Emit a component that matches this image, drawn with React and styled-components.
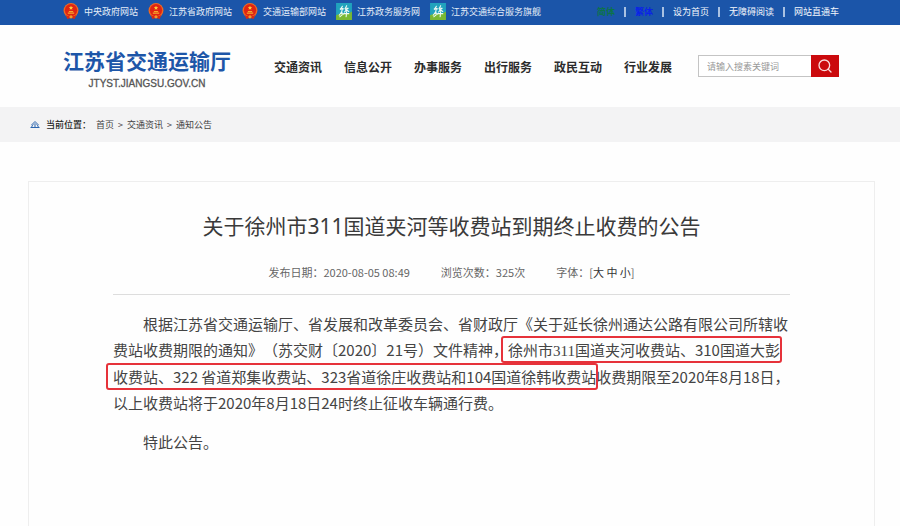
import { useState } from "react";
import styled, { createGlobalStyle } from "styled-components";
import { Search } from "lucide-react";

const GlobalStyle = createGlobalStyle`
  * {
    box-sizing: border-box;
  }

  body {
    margin: 0;
    background-color: #fefefe;
    color: #444;
    font-family: "Noto Sans CJK SC", sans-serif;
    text-spacing-trim: space-all;
  }

  a {
    color: inherit;
    text-decoration: none;
  }
`;

const Page = styled.div`
  display: flex;
  flex-direction: column;
  min-height: 100vh;
`;

const TopBar = styled.div`
  display: flex;
  align-items: center;
  justify-content: space-between;
  height: 25px;
  padding: 0 61px 2px 63px;
  background-color: #1b55a9;
  color: #e4edf8;
  font-size: 9px;
  line-height: 14px;
  white-space: nowrap;
`;

const SiteLinks = styled.nav`
  display: flex;
  gap: 10px;
`;

const SiteLink = styled.a`
  display: flex;
  align-items: center;
  gap: 5px;
`;

const ToolLinks = styled.div`
  display: flex;
  align-items: center;
  gap: 9px;
`;

const ToolLink = styled.a`
  color: ${(props) => props.$color || "#f4f8fc"};
  font-weight: ${(props) => (props.$color ? "bold" : "normal")};
`;

const Separator = styled.span`
  width: 2px;
  height: 10px;
  background-color: #a9c1e2;
`;

const Header = styled.header`
  display: flex;
  align-items: center;
  height: 82px;
  padding: 0 61px 0 63px;
  white-space: nowrap;
`;

const Logo = styled.a`
  display: flex;
  flex-direction: column;
  align-items: center;
  padding-top: 8px;
`;

const LogoName = styled.span`
  color: #1d56a8;
  font-size: 21px;
  font-weight: bold;
  line-height: 28px;
`;

const LogoDomain = styled.span`
  color: #555;
  font-family: "Liberation Sans", Arial, sans-serif;
  font-size: 10px;
  line-height: 20px;
  -webkit-text-stroke: 0.3px #555;
`;

const MainNav = styled.nav`
  display: flex;
  gap: 22px;
  margin-left: 43px;
  color: #2c2c2c;
  font-size: 12px;
  font-weight: bold;
`;

const SearchForm = styled.form`
  display: flex;
  width: 141px;
  height: 22px;
  margin-left: auto;
`;

const SearchInput = styled.input`
  flex: 1;
  min-width: 0;
  padding: 0 8px;
  border: 1px solid #c4c4c4;
  border-right: none;
  border-radius: 0;
  background-color: #fff;
  color: #444;
  font-family: inherit;
  font-size: 9px;
  outline: none;

  &::placeholder {
    color: #999;
  }
`;

const SearchButton = styled.button`
  display: flex;
  align-items: center;
  justify-content: center;
  width: 28px;
  padding: 0;
  border: none;
  background-color: #cb0a0d;
  color: #fbdcdc;
  cursor: pointer;
`;

const Breadcrumb = styled.nav`
  display: flex;
  align-items: center;
  gap: 4px;
  height: 35px;
  padding: 0 30px;
  background-color: #f3f3f4;
  color: #444;
  font-size: 9px;
`;

const BreadcrumbLabel = styled.span`
  margin: 0 1px 0 2px;
  color: #222;
  font-weight: 500;
`;

const Article = styled.article`
  flex: 1;
  margin: 39px 25px 0 28px;
  padding: 29px 84px 40px;
  border: 1px solid #eee;
  border-bottom: none;
`;

const Title = styled.h1`
  margin: 0 0 23px;
  color: #3a3a3a;
  font-family: "Noto Sans", "Noto Sans CJK SC", sans-serif;
  font-size: 21px;
  font-weight: normal;
  line-height: 30px;
  text-align: center;
`;

const Meta = styled.div`
  display: flex;
  justify-content: center;
  gap: 31px;
  padding-bottom: 14px;
  border-bottom: 1px solid #ddd;
  color: #666;
  font-size: 11px;
  line-height: 16px;
`;

const SizeButton = styled.button`
  padding: 0;
  border: none;
  background: none;
  color: #333;
  font: inherit;
  cursor: pointer;
`;

const Content = styled.div`
  margin-top: 16px;
  font-size: ${(props) => props.$size}px;
  line-height: 26px;
  white-space: nowrap;
`;

const Paragraph = styled.p`
  margin: 0 0 13px;
  text-indent: 2em;
`;

const Highlight = styled.mark`
  margin-left: -5px;
  padding: 1px 0 1px 5px;
  border-radius: 1px;
  outline: 2px solid #e6323a;
  background: none;
  color: inherit;
`;

const SerifNumber = styled.span`
  font-family: "Liberation Serif", "Times New Roman", serif;
`;

const EmblemIcon = () => (
  <svg width="16" height="17" viewBox="0 0 30 32" aria-hidden="true">
    <circle cx="15" cy="14" r="14" fill="#ee6a22" />
    <circle cx="15" cy="13.5" r="11.5" fill="#df2412" />
    <path d="M15 5l1.2 2.6 2.8.3-2.1 1.9.6 2.8-2.5-1.4-2.5 1.4.6-2.8L11 7.9l2.8-.3z" fill="#ffc83a" />
    <path d="M9 18h12v2H9zM11 15h8v2h-8z" fill="#f6a92c" />
    <path d="M5 22c3 3 6 3 10 1 4 2 7 2 10-1l-3 8-7-2-7 2z" fill="#d92a14" />
    <circle cx="15" cy="26" r="3" fill="#f29b2a" />
  </svg>
);

const ServiceIcon = () => (
  <svg width="16" height="17" viewBox="0 0 30 32" aria-hidden="true">
    <path d="M0 0h30v20L0 26z" fill="#21a3bd" />
    <path d="M0 23C10 18 20 24 30 16v16H0z" fill="#79b833" />
    <g fill="none" stroke="#effaf4" strokeWidth="2" strokeLinecap="round">
      <path d="M12 6l-4 6M8 11h6M12 10l-2 10M11 16l-5 7M20 5l-3 6M17 10h6M22 10l-6 7M18 12l6 4M15 20h9M20 16l-1 10M10 17l4 4M7 26l5-4" />
    </g>
  </svg>
);

const LocationIcon = () => (
  <svg width="10" height="9" viewBox="0 0 20 18" fill="none" stroke="#2b65ae" strokeWidth="2" aria-hidden="true">
    <path d="M3 10l7-7 7 7M7 10l3-3 3 3M1 15h18M5 10l-2 5M15 10l2 5M8 12h4" />
  </svg>
);

const siteLinks = [
  { name: "中央政府网站", icon: EmblemIcon },
  { name: "江苏省政府网站", icon: EmblemIcon },
  { name: "交通运输部网站", icon: EmblemIcon },
  { name: "江苏政务服务网", icon: ServiceIcon },
  { name: "江苏交通综合服务旗舰", icon: ServiceIcon },
];

const navItems = ["交通资讯", "信息公开", "办事服务", "出行服务", "政民互动", "行业发展"];

const fontSizes = { 大: 17, 中: 15, 小: 13 };

const App = () => {
  const [keyword, setKeyword] = useState("");
  const [size, setSize] = useState(15);

  return (
    <Page>
      <GlobalStyle />
      <TopBar>
        <SiteLinks>
          {siteLinks.map(({ name, icon: Icon }) => (
            <SiteLink key={name} href="#">
              <Icon />
              {name}
            </SiteLink>
          ))}
        </SiteLinks>
        <ToolLinks>
          <ToolLink href="#" $color="#0c7348">简体</ToolLink>
          <Separator />
          <ToolLink href="#" $color="#0a22e8">繁体</ToolLink>
          <Separator />
          <ToolLink href="#">设为首页</ToolLink>
          <Separator />
          <ToolLink href="#">无障碍阅读</ToolLink>
          <Separator />
          <ToolLink href="#">网站直通车</ToolLink>
        </ToolLinks>
      </TopBar>

      <Header>
        <Logo href="#">
          <LogoName>江苏省交通运输厅</LogoName>
          <LogoDomain>JTYST.JIANGSU.GOV.CN</LogoDomain>
        </Logo>
        <MainNav>
          {navItems.map((item) => (
            <a key={item} href="#">{item}</a>
          ))}
        </MainNav>
        <SearchForm onSubmit={(e) => e.preventDefault()}>
          <SearchInput
            aria-label="搜索"
            placeholder="请输入搜素关键词"
            value={keyword}
            onChange={(e) => setKeyword(e.target.value)}
          />
          <SearchButton type="submit" aria-label="搜索">
            <Search size={16} strokeWidth={2} />
          </SearchButton>
        </SearchForm>
      </Header>

      <Breadcrumb>
        <LocationIcon />
        <BreadcrumbLabel>当前位置：</BreadcrumbLabel>
        <a href="#">首页</a>
        <span>&gt;</span>
        <a href="#">交通资讯</a>
        <span>&gt;</span>
        <a href="#">通知公告</a>
      </Breadcrumb>

      <Article>
        <Title>关于徐州市311国道夹河等收费站到期终止收费的公告</Title>
        <Meta>
          <span>发布日期：2020-08-05 08:49</span>
          <span>浏览次数：325次</span>
          <span>
            字体：[
            {Object.keys(fontSizes).map((label, i) => (
              <span key={label}>
                {i > 0 && " "}
                <SizeButton type="button" onClick={() => setSize(fontSizes[label])}>
                  {label}
                </SizeButton>
              </span>
            ))}
            ]
          </span>
        </Meta>
        <Content $size={size}>
          <Paragraph>
            根据江苏省交通运输厅、省发展和改革委员会、省财政厅《关于延长徐州通达公路有限公司所辖收
            <br />
            费站收费期限的通知》（苏交财〔2020〕21号）文件精神，
            <Highlight>
              徐州市<SerifNumber>311</SerifNumber>国道夹河收费站、310国道大彭
            </Highlight>
            <br />
            <Highlight>
              收费站、322 省道郑集收费站、323省道徐庄收费站和104国道徐韩收费站
            </Highlight>
            收费期限至2020年8月18日，
            <br />
            以上收费站将于2020年8月18日24时终止征收车辆通行费。
          </Paragraph>
          <Paragraph>特此公告。</Paragraph>
        </Content>
      </Article>
    </Page>
  );
};

export default App;
